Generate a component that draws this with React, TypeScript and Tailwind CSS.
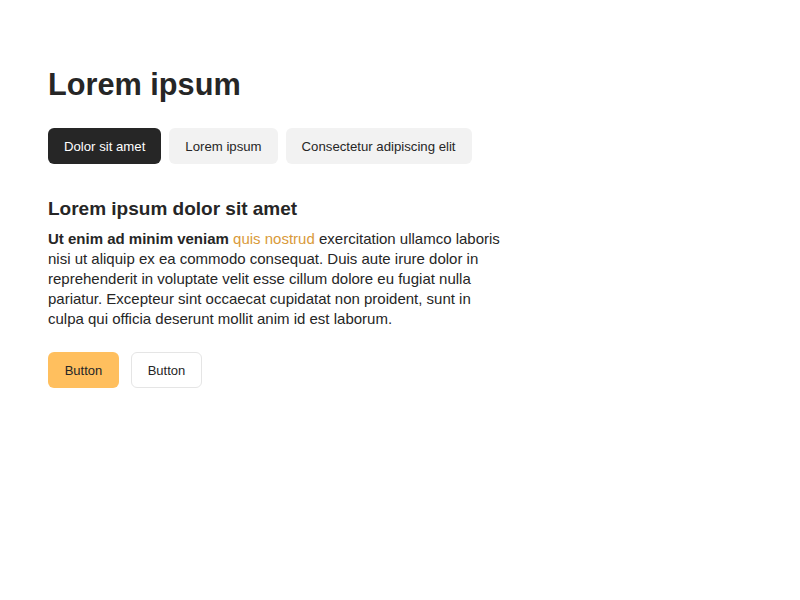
export default function App() {
    const tabs = ['Dolor sit amet', 'Lorem ipsum', 'Consectetur adipiscing elit'];

    return (
        <div className="min-h-screen bg-white px-12 pt-[66px] text-[#262626]" style={{ fontFamily: '"Liberation Sans", Arial, sans-serif' }}>
            <h1 className="text-[30.7px] font-bold leading-[38px]">Lorem ipsum</h1>

            <div className="mt-6 flex gap-2">
                {tabs.map((t, i) => (
                    <button
                        key={t}
                        className={
                            i === 0
                                ? 'h-9 rounded-md bg-[#262626] px-4 pt-px text-[13.2px] text-white'
                                : 'h-9 rounded-md bg-[#f2f2f2] px-4 pt-px text-[13.2px] text-[#262626]'
                        }
                    >
                        {t}
                    </button>
                ))}
            </div>

            <div className="mt-[33px] w-[460px]">
                <h2 className="text-[19px] font-bold leading-6">Lorem ipsum dolor sit amet</h2>
                <p className="mt-2 text-[15px] leading-5">
                    <strong className="font-bold">Ut enim ad minim veniam</strong>{' '}
                    <span className="text-[#d99a3a]">quis nostrud</span> exercitation ullamco laboris nisi ut aliquip ex ea
                    commodo consequat. Duis aute irure dolor in reprehenderit in voluptate velit esse cillum dolore eu
                    fugiat nulla pariatur. Excepteur sint occaecat cupidatat non proident, sunt in culpa qui officia
                    deserunt mollit anim id est laborum.
                </p>

                <div className="mt-[23px] flex gap-3">
                    <button className="h-9 w-[71px] rounded-md bg-[#ffbf5e] pt-px text-[13px]">Button</button>
                    <button className="h-9 w-[71px] rounded-md border border-[#e5e5e5] bg-white pt-px text-[13px]">Button</button>
                </div>
            </div>
        </div>
    );
}
